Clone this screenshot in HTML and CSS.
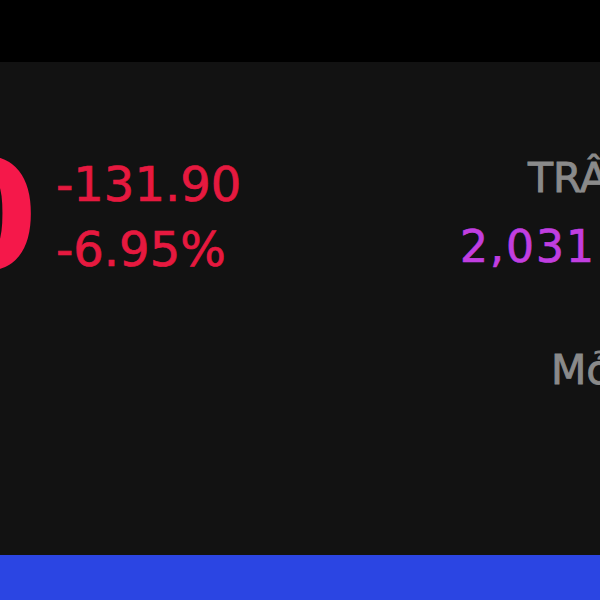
FILE: index.html
```html
<!DOCTYPE html>
<html lang="vi">
<head>
<meta charset="utf-8">
<link rel="stylesheet" href="styles.css">
</head>
<body>
<div class="topbar"></div>
<main class="panel">
  <section class="quote">
    <div class="price">1,765.90</div>
    <div class="change">
      <div class="chg-line">-131.90</div>
      <div class="chg-line">-6.95%</div>
    </div>
  </section>
  <section class="stats">
    <div class="stat ceil">
      <div class="label">TRÂN</div>
      <div class="value">2,031</div>
    </div>
    <div class="stat open">
      <div class="label">Mở cửa</div>
    </div>
  </section>
</main>
<div class="bottombar"></div>
</body>
</html>
```
FILE: styles.css
```css
html, body {
  margin: 0;
  padding: 0;
  width: 600px;
  height: 600px;
  overflow: hidden;
  background: #121212;
  font-family: "DejaVu Sans", Lato, sans-serif;
}
body {
  display: flex;
  flex-direction: column;
}
.topbar {
  height: 62px;
  background: #000;
  flex: none;
}
.panel {
  flex: 1;
  display: flex;
  background: #121212;
  overflow: hidden;
}
.quote {
  display: flex;
  align-items: flex-start;
  padding-top: 90px;
}
.price {
  width: 38px;
  display: flex;
  justify-content: flex-end;
  white-space: nowrap;
  font-size: 151px;
  font-weight: 700;
  line-height: 151px;
  color: #f5184a;
  margin-top: -10px;
}
.change {
  margin-left: 18px;
  color: #e6193f;
  font-size: 48px;
  line-height: 65px;
  -webkit-text-stroke: 0.7px currentColor;
}
.stats {
  margin-left: auto;
  width: 140px;
  flex: none;
  display: flex;
  flex-direction: column;
  white-space: nowrap;
  padding-top: 96px;
}
.label {
  color: #8a8a8a;
  font-size: 41px;
  line-height: 41px;
  -webkit-text-stroke: 0.9px currentColor;
}
.value {
  color: #c13ee0;
  font-size: 44px;
  line-height: 44px;
  letter-spacing: 2px;
  margin-top: 26px;
  -webkit-text-stroke: 0.7px currentColor;
}
.ceil .label { padding-left: 68px; }
.open { margin-top: 81px; }
.open .label { padding-left: 91px; }
.bottombar {
  height: 45px;
  background: #2b45e3;
  flex: none;
}
```
